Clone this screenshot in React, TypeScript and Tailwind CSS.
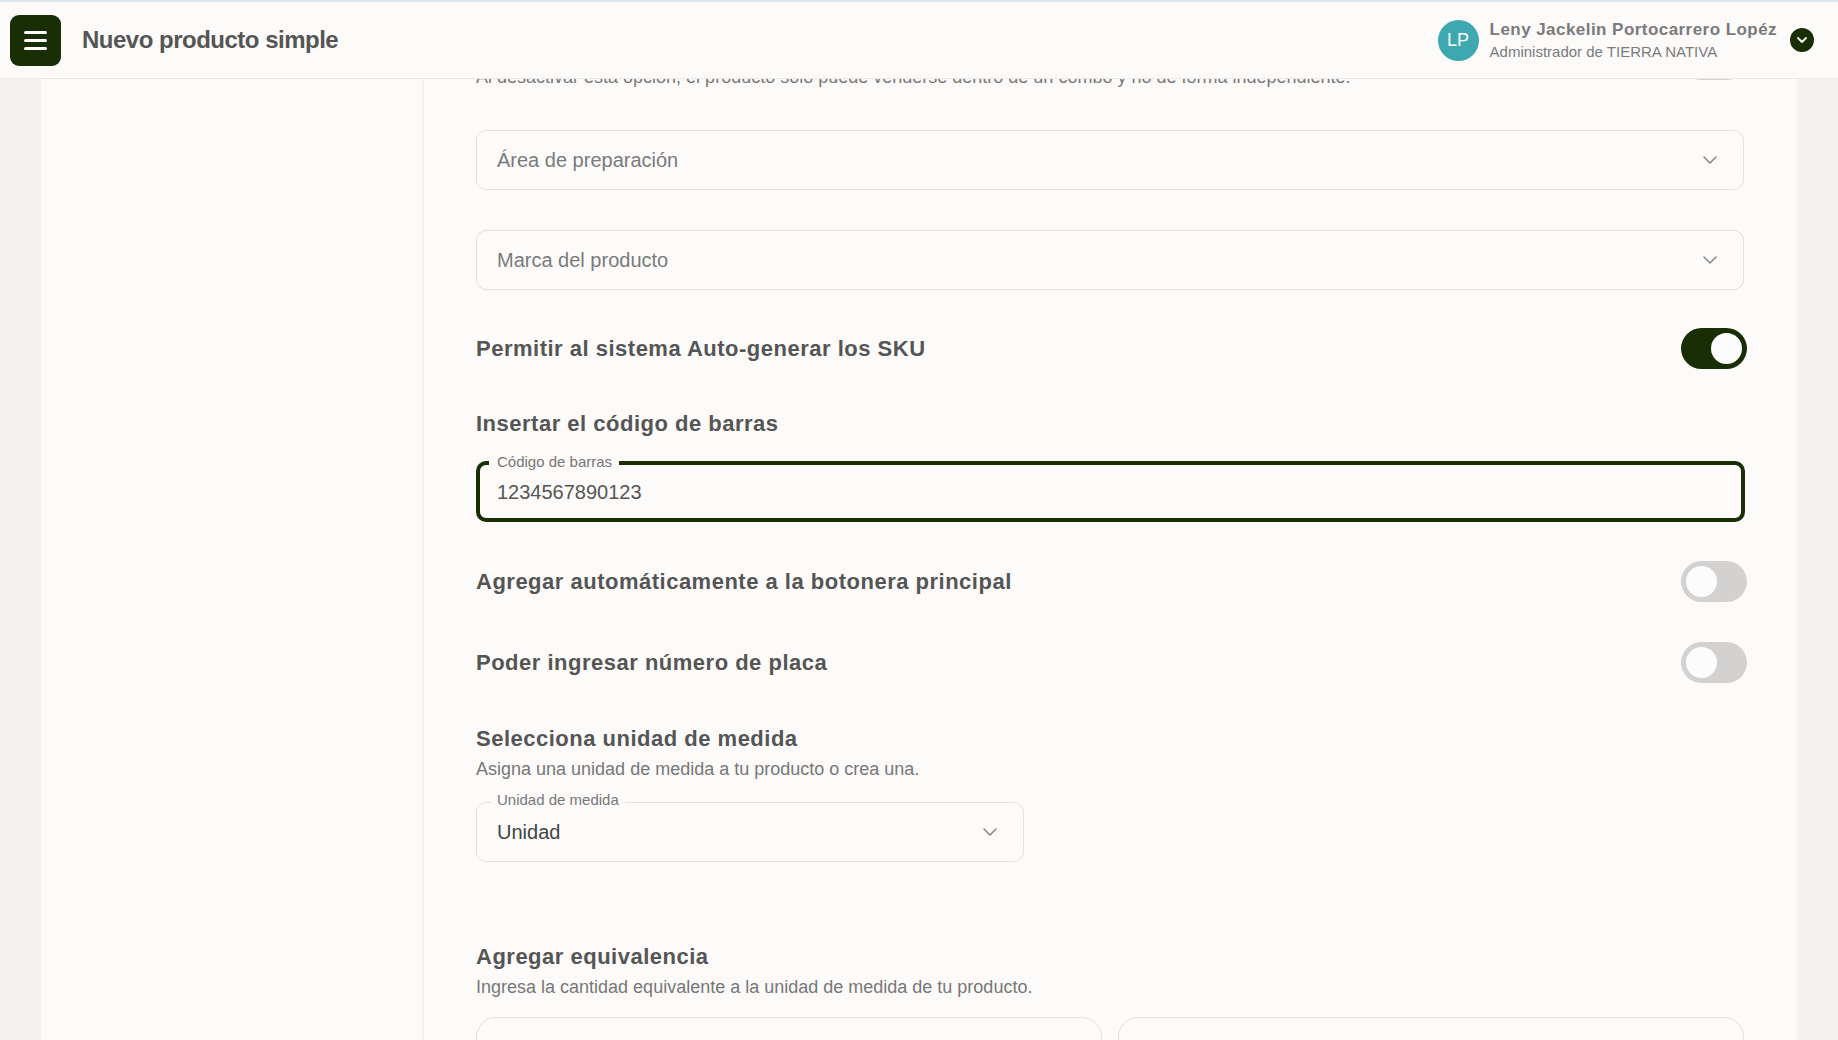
import React from 'react';
import clsx from 'clsx';

// Nuevo producto simple - product form (scrolled state)

const Chevron: React.FC<{ className?: string }> = ({ className }) => (
  <svg width="14" height="8" viewBox="0 0 14 8" fill="none" className={className}>
    <path d="M1 1l6 6 6-6" stroke="currentColor" strokeWidth="1.5" strokeLinecap="round" strokeLinejoin="round" />
  </svg>
);

const Toggle: React.FC<{ on?: boolean }> = ({ on }) => (
  <div
    className={clsx(
      'flex h-[41px] w-[66px] shrink-0 items-center rounded-full px-[5px]',
      on ? 'justify-end bg-[#1a2e05]' : 'justify-start bg-[#d4d2d0]'
    )}
  >
    <div className="h-[31px] w-[31px] rounded-full bg-[#fcfcfc]" />
  </div>
);

const SelectField: React.FC<{ placeholder: string }> = ({ placeholder }) => (
  <div className="flex h-[60px] w-full items-center justify-between rounded-[10px] border border-[#e2e0de] pl-[20px] pr-[26px]">
    <span className="text-[20px] text-[#7a7a7a]">{placeholder}</span>
    <Chevron className="text-[#858585]" />
  </div>
);

const ToggleRow: React.FC<{ label: string; on?: boolean; className?: string }> = ({ label, on, className }) => (
  <div className={clsx('flex items-center justify-between', className)}>
    <span className="text-[22px] font-bold leading-[28px] tracking-[0.5px] text-[#555]">{label}</span>
    <Toggle on={on} />
  </div>
);

export default function App() {
  return (
    <div className="h-[1040px] w-[1838px] overflow-hidden bg-[#f3f2f1] font-['Liberation_Sans',Arial,sans-serif]">
      {/* Header */}
      <header className="flex h-[79px] items-center justify-between border-t-2 border-b border-t-[#dde5ed] border-b-[#ebeae8] bg-[#fcfbfa] pl-[10px] pr-[24px]">
        <div className="flex items-center">
          <button className="flex h-[51px] w-[51px] flex-col items-center justify-center gap-[5px] rounded-[9px] bg-[#1a2e05]">
            <span className="h-[3px] w-[23px] rounded-full bg-white" />
            <span className="h-[3px] w-[23px] rounded-full bg-white" />
            <span className="h-[3px] w-[23px] rounded-full bg-white" />
          </button>
          <h1 className="ml-[21px] text-[24px] font-bold tracking-[-0.5px] text-[#555]">Nuevo producto simple</h1>
        </div>
        <div className="flex items-center">
          <div className="flex h-[41px] w-[41px] items-center justify-center rounded-full bg-[#3ea8b1] text-[18px] text-white">
            LP
          </div>
          <div className="ml-[11px] flex flex-col">
            <span className="text-[17px] font-bold leading-[20px] tracking-[0.45px] text-[#7a7a7a]">
              Leny Jackelin Portocarrero Lopéz
            </span>
            <span className="mt-[3px] text-[15px] leading-[18px] text-[#7a7a7a]">Administrador de TIERRA NATIVA</span>
          </div>
          <div className="ml-[13px] flex h-[24px] w-[24px] items-center justify-center rounded-full bg-[#1a2e05] text-white">
            <svg width="10" height="6" viewBox="0 0 10 6" fill="none">
              <path d="M1 1l4 4 4-4" stroke="currentColor" strokeWidth="1.8" strokeLinecap="round" strokeLinejoin="round" />
            </svg>
          </div>
        </div>
      </header>

      {/* Body */}
      <div className="flex h-[961px] overflow-hidden px-[41px]">
        <aside className="w-[381px] shrink-0 bg-[#fcfbfa]" />
        <main className="ml-[2px] flex-1 overflow-hidden bg-[#fcfbfa]">
          <div className="flex flex-col pl-[52px] pr-[50px]">
            {/* partially scrolled row */}
            <div className="-mt-[40px] flex items-start justify-between">
              <p className="pt-[27px] text-[18px] leading-[22px] text-[#777]">
                Al desactivar esta opción, el producto solo puede venderse dentro de un combo y no de forma independiente.
              </p>
              <Toggle />
            </div>

            <div className="mr-[3px] mt-[42px]">
              <SelectField placeholder="Área de preparación" />
            </div>
            <div className="mr-[3px] mt-[40px]">
              <SelectField placeholder="Marca del producto" />
            </div>

            <ToggleRow className="mt-[38px]" label="Permitir al sistema Auto-generar los SKU" on />

            <h2 className="mt-[41px] text-[22px] font-bold leading-[28px] tracking-[0.5px] text-[#555]">
              Insertar el código de barras
            </h2>
            <div className="relative mr-[2px] mt-[23px] flex h-[61px] items-center rounded-[10px] border-4 border-[#1a2e05] pl-[17px]">
              <span className="absolute -top-[12px] left-[9px] bg-[#fcfbfa] pl-[8px] pr-[7px] text-[15px] leading-[18px] text-[#777]">
                Código de barras
              </span>
              <span className="text-[20px] text-[#555]">1234567890123</span>
            </div>

            <ToggleRow className="mt-[39px]" label="Agregar automáticamente a la botonera principal" />
            <ToggleRow className="mt-[40px]" label="Poder ingresar número de placa" />

            <h2 className="mt-[42px] text-[22px] font-bold leading-[28px] tracking-[0.5px] text-[#555]">
              Selecciona unidad de medida
            </h2>
            <p className="mt-[5px] text-[18px] leading-[22px] text-[#777]">
              Asigna una unidad de medida a tu producto o crea una.
            </p>
            <div className="relative mt-[22px] flex h-[60px] w-[548px] items-center justify-between rounded-[10px] border border-[#e2e0de] pl-[20px] pr-[26px]">
              <span className="absolute -top-[12px] left-[14px] bg-[#fcfbfa] px-[6px] text-[15px] leading-[18px] text-[#777]">
                Unidad de medida
              </span>
              <span className="text-[20px] text-[#444]">Unidad</span>
              <Chevron className="text-[#858585]" />
            </div>

            <h2 className="mt-[81px] text-[22px] font-bold leading-[28px] tracking-[0.5px] text-[#555]">
              Agregar equivalencia
            </h2>
            <p className="mt-[5px] text-[18px] leading-[22px] text-[#777]">
              Ingresa la cantidad equivalente a la unidad de medida de tu producto.
            </p>
            <div className="mr-[3px] mt-[19px] grid grid-cols-2 gap-[16px]">
              <div className="h-[60px] rounded-[20px] border border-[#e2e0de]" />
              <div className="h-[60px] rounded-[20px] border border-[#e2e0de]" />
            </div>
          </div>
        </main>
      </div>
    </div>
  );
}
